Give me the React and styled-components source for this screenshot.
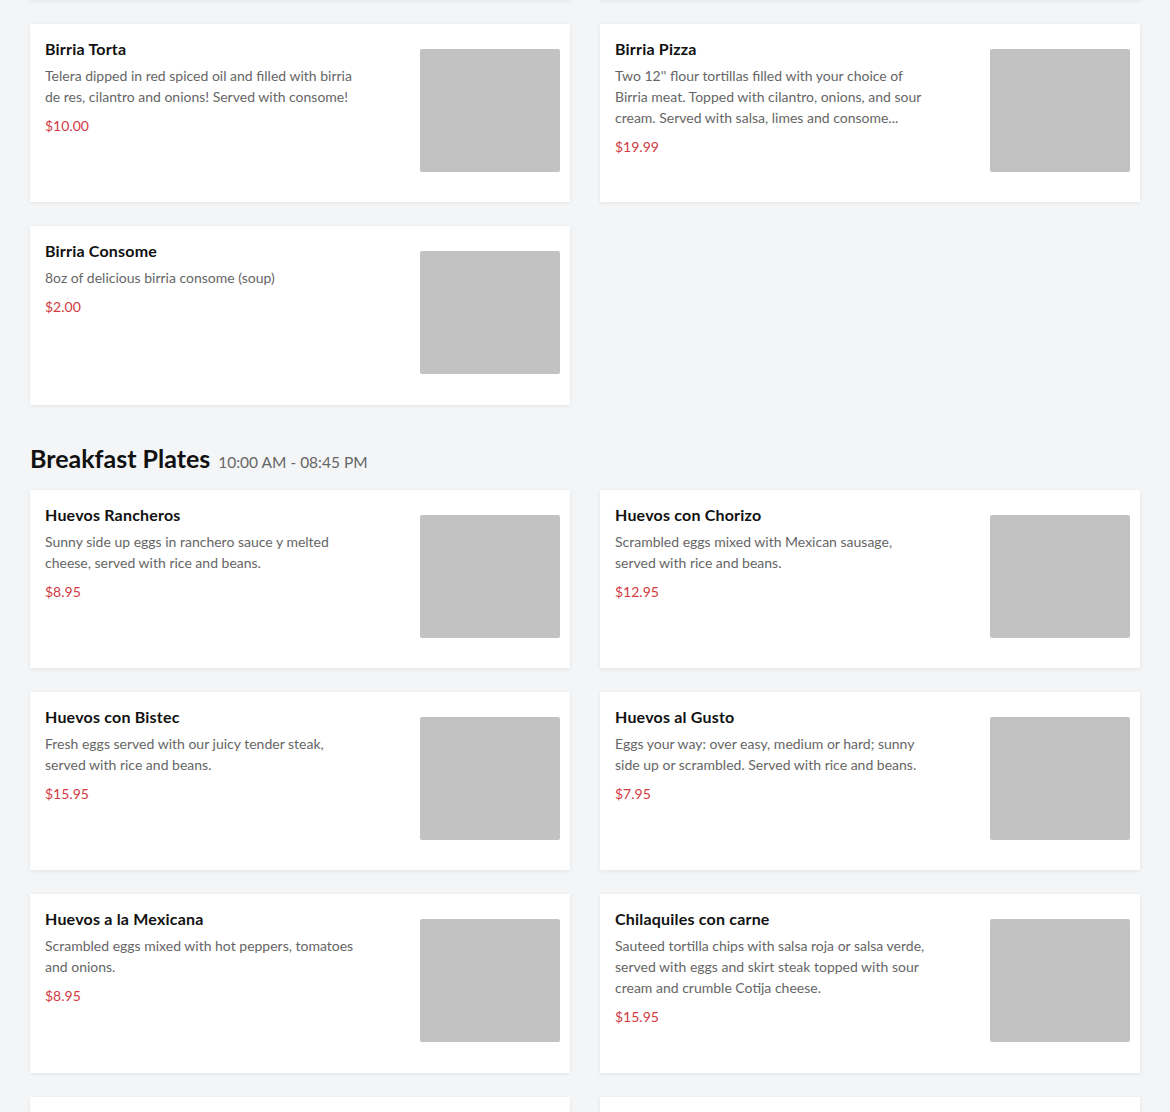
import React from "react";
import styled, { createGlobalStyle } from "styled-components";

const GlobalStyle = createGlobalStyle`
  html, body {
    margin: 0;
    padding: 0;
    background: #f3f5f6;
    font-family: Lato, "Noto Sans", sans-serif;
    overflow: hidden;
  }
`;

const Page = styled.div`
  padding: 0 30px;
  margin-top: -178.6px;
`;

const Grid = styled.div`
  display: grid;
  grid-template-columns: 540px 540px;
  column-gap: 30px;
  row-gap: 24px;
`;

const Card = styled.div`
  display: flex;
  height: 178.4px;
  box-sizing: border-box;
  background: #fff;
  box-shadow: 0 1px 4px rgba(0, 0, 0, 0.08);
`;

const Info = styled.div`
  flex: 1;
  padding: 13px 15px;
  max-width: 320px;
`;

const Name = styled.h3`
  margin: 0;
  font-size: 16px;
  line-height: 24px;
  font-weight: 700;
  letter-spacing: 0.2px;
  color: #111;
`;

const Desc = styled.p`
  margin: 4px 0 0;
  font-size: 14px;
  line-height: 21px;
  color: #666;
`;

const Price = styled.div`
  margin-top: 8px;
  font-size: 14px;
  line-height: 21px;
  color: #d23a3f;
`;

const Thumb = styled.div`
  width: 140px;
  height: 123px;
  margin: 25px 10px 0 auto;
  background: #c2c2c2;
  border-radius: 2px;
`;

const SectionHead = styled.div`
  display: flex;
  align-items: baseline;
  gap: 8px;
  margin: 37px 0 12px;
  line-height: 32px;
`;

const SectionTitle = styled.h2`
  margin: 0;
  font-size: 25px;
  font-weight: 700;
  color: #111;
`;

const Hours = styled.span`
  font-size: 15.5px;
  color: #666;
`;

const birria = [
  { name: "", desc: "", price: "" },
  { name: "", desc: "", price: "" },
  {
    name: "Birria Torta",
    desc: "Telera dipped in red spiced oil and filled with birria de res, cilantro and onions! Served with consome!",
    price: "$10.00",
  },
  {
    name: "Birria Pizza",
    desc: "Two 12'' flour tortillas filled with your choice of Birria meat. Topped with cilantro, onions, and sour cream. Served with salsa, limes and consome...",
    price: "$19.99",
  },
  {
    name: "Birria Consome",
    desc: "8oz of delicious birria consome (soup)",
    price: "$2.00",
  },
];

const breakfast = [
  {
    name: "Huevos Rancheros",
    desc: "Sunny side up eggs in ranchero sauce y melted cheese, served with rice and beans.",
    price: "$8.95",
  },
  {
    name: "Huevos con Chorizo",
    desc: "Scrambled eggs mixed with Mexican sausage, served with rice and beans.",
    price: "$12.95",
  },
  {
    name: "Huevos con Bistec",
    desc: "Fresh eggs served with our juicy tender steak, served with rice and beans.",
    price: "$15.95",
  },
  {
    name: "Huevos al Gusto",
    desc: "Eggs your way: over easy, medium or hard; sunny side up or scrambled. Served with rice and beans.",
    price: "$7.95",
  },
  {
    name: "Huevos a la Mexicana",
    desc: "Scrambled eggs mixed with hot peppers, tomatoes and onions.",
    price: "$8.95",
  },
  {
    name: "Chilaquiles con carne",
    desc: "Sauteed tortilla chips with salsa roja or salsa verde, served with eggs and skirt steak topped with sour cream and crumble Cotija cheese.",
    price: "$15.95",
  },
  { name: "", desc: "", price: "" },
  { name: "", desc: "", price: "" },
];

const MenuItem = ({ item }) => (
  <Card>
    <Info>
      {item.name && <Name>{item.name}</Name>}
      {item.desc && <Desc>{item.desc}</Desc>}
      {item.price && <Price>{item.price}</Price>}
    </Info>
    <Thumb />
  </Card>
);

const App = () => {
  return (
    <>
      <GlobalStyle />
      <Page>
        <Grid>
          {birria.map((item, i) => (
            <MenuItem key={i} item={item} />
          ))}
        </Grid>
        <SectionHead>
          <SectionTitle>Breakfast Plates</SectionTitle>
          <Hours>10:00 AM - 08:45 PM</Hours>
        </SectionHead>
        <Grid>
          {breakfast.map((item, i) => (
            <MenuItem key={i} item={item} />
          ))}
        </Grid>
      </Page>
    </>
  );
};

export default App;
